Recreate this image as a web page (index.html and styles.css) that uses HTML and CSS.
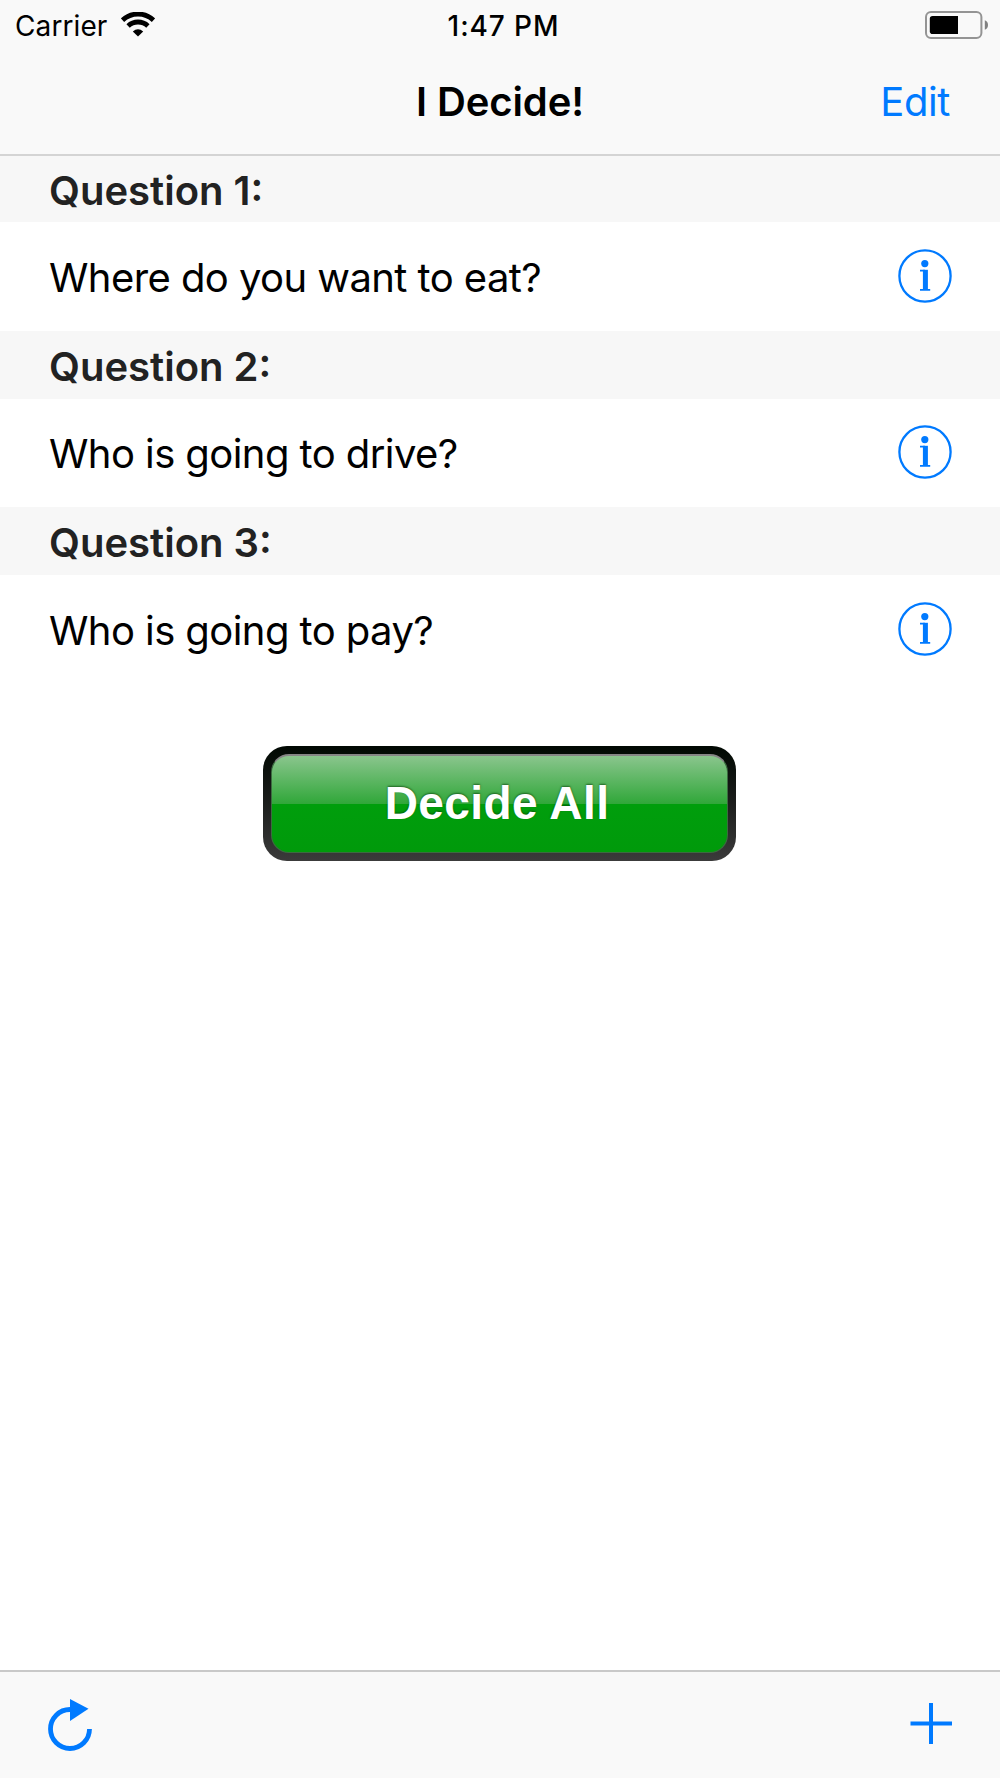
FILE: index.html
```html
<!DOCTYPE html>
<html lang="en">
<head>
<meta charset="utf-8">
<title>I Decide!</title>
<link rel="stylesheet" href="styles.css">
</head>
<body>
<div class="screen">
  <header class="top">
    <div class="status">
      <div class="carrier">
        <span class="carrier-name">Carrier</span>
        <svg class="wifi" width="34" height="25" viewBox="0 0 34 25">
          <path d="M1.5 8.2A22.5 22.5 0 0 1 32.5 8.2" fill="none" stroke="#000" stroke-width="4.8"/>
          <path d="M7.1 14A14.3 14.3 0 0 1 26.9 14" fill="none" stroke="#000" stroke-width="4.8"/>
          <path d="M11.8 19.4Q17 15.2 22.2 19.4L17 24.5Z"/>
        </svg>
      </div>
      <span class="time">1:47 PM</span>
      <svg class="battery" width="64" height="28" viewBox="0 0 64 28">
        <rect x="1" y="1" width="55.4" height="26" rx="5" fill="none" stroke="#949494" stroke-width="2"/>
        <path d="M7.6 5H33V23H7.6Q4.8 23 4.8 20.2V7.8Q4.8 5 7.6 5Z"/>
        <path d="M59.8 9.2Q63 10.5 63 14T59.8 18.8Z" fill="#808080"/>
      </svg>
    </div>
    <nav class="nav">
      <h1 class="title">I Decide!</h1>
      <a class="edit">Edit</a>
    </nav>
  </header>
  <main class="list">
    <h2 class="section first"><span>Question 1:</span></h2>
    <div class="row"><span class="question">Where do you want to eat?</span>
      <svg class="info" width="56" height="56" viewBox="0 0 56 56"><circle cx="28" cy="28" r="25.6"/><path class="stem" d="M28.4 21.8V42"/><path class="serif" d="M23 22.7H28M23 41.8H33.2"/><circle class="dot" cx="27.8" cy="15.6" r="3.6"/></svg></div>
    <h2 class="section"><span>Question 2:</span></h2>
    <div class="row"><span class="question">Who is going to drive?</span>
      <svg class="info" width="56" height="56" viewBox="0 0 56 56"><circle cx="28" cy="28" r="25.6"/><path class="stem" d="M28.4 21.8V42"/><path class="serif" d="M23 22.7H28M23 41.8H33.2"/><circle class="dot" cx="27.8" cy="15.6" r="3.6"/></svg></div>
    <h2 class="section"><span>Question 3:</span></h2>
    <div class="row"><span class="question">Who is going to pay?</span>
      <svg class="info" width="56" height="56" viewBox="0 0 56 56"><circle cx="28" cy="28" r="25.6"/><path class="stem" d="M28.4 21.8V42"/><path class="serif" d="M23 22.7H28M23 41.8H33.2"/><circle class="dot" cx="27.8" cy="15.6" r="3.6"/></svg></div>
    <button class="decide"><span class="face"><span class="label">Decide All</span></span></button>
  </main>
  <footer class="toolbar">
    <svg class="refresh" width="44" height="54" viewBox="0 0 44 54">
      <path d="M22 10.5A19.5 19.5 0 1 0 41.5 30" fill="none" stroke="#007aff" stroke-width="4.8"/>
      <path d="M22 0L40.5 9.7L22 22Z" fill="#007aff"/>
    </svg>
    <svg class="plus" width="42" height="42" viewBox="0 0 42 42">
      <path d="M21 0V41M0.5 20.5H42" fill="none" stroke="#007aff" stroke-width="4"/>
    </svg>
  </footer>
</div>
</body>
</html>
```
FILE: styles.css
```css
* { box-sizing: border-box; }
body { margin: 0; background: #fff; font-family: Inter, "Liberation Sans", sans-serif; color: #000; }
.screen { width: 1000px; height: 1778px; display: flex; flex-direction: column; overflow: hidden; }
.top { height: 156px; flex: none; background: #f9f9f9; border-bottom: 2px solid #d4d4d4; }
.status { height: 50px; display: grid; grid-template-columns: 1fr auto 1fr; align-items: center; padding: 0 11px 0 15px; font-size: 28px; }
.carrier { display: flex; align-items: center; }
.carrier-name { width: 106px; line-height: 52px; letter-spacing: .1px; }
.wifi { margin-bottom: 4px; }
.time { font-weight: 500; line-height: 52px; letter-spacing: .9px; padding-left: 3px; }
.battery { justify-self: end; margin-bottom: 3px; }
.nav { height: 104px; display: grid; grid-template-columns: 1fr auto 1fr; align-items: center; padding: 0 50px; line-height: 104px; font-size: 40px; }
.title { grid-column: 2; margin: 0; font-size: 40px; font-weight: 600; letter-spacing: -.1px; }
.edit { justify-self: end; color: #007aff; letter-spacing: -.4px; }
.list { flex: 1; display: flex; flex-direction: column; }
.section { margin: 0; height: 68px; flex: none; background: #f7f7f7; color: #222; padding-left: 49px; font-size: 40px; font-weight: 600; line-height: 72px; }
.section.first { height: 66px; line-height: 70px; }
.row { height: 108.5px; flex: none; display: flex; align-items: center; justify-content: space-between; padding: 0 47px 0 49px; font-size: 40px; line-height: 108px; }
.question { letter-spacing: -.57px; padding-top: 3px; }
.info { fill: none; stroke: #007aff; stroke-width: 2.3; margin-bottom: 1.5px; }
.info .stem { stroke-width: 5; }
.info .serif { stroke-width: 1.8; }
.info .dot { fill: #007aff; stroke: none; }
.decide { width: 473px; height: 115px; margin: 62.5px 0 0 263px; padding: 8px; border: 0; border-radius: 24px; background: linear-gradient(#000802, #1c1e1c 50%, #3b3b3b); font: inherit; }
.face { display: flex; align-items: center; justify-content: center; height: 100%; border-radius: 18px; border: 1px solid #3c6b40; border-top: 2px solid #858585; background: linear-gradient(#8ac58d 0, #30a739 48px, #009e0c 48px, #009a0b 100%); }
.label { font-family: "Liberation Sans", Arial, sans-serif; font-weight: 700; font-size: 46px; letter-spacing: .4px; padding: 0 5px 2px 0; color: #fff; text-shadow: 0 -1px 2px rgba(0,50,0,.6); }
.toolbar { height: 108px; flex: none; display: flex; justify-content: space-between; align-items: flex-start; background: #f9f9f9; border-top: 2px solid #c9c9c9; padding: 27px 48px 0; }
.plus { margin-top: 4px; }
```
